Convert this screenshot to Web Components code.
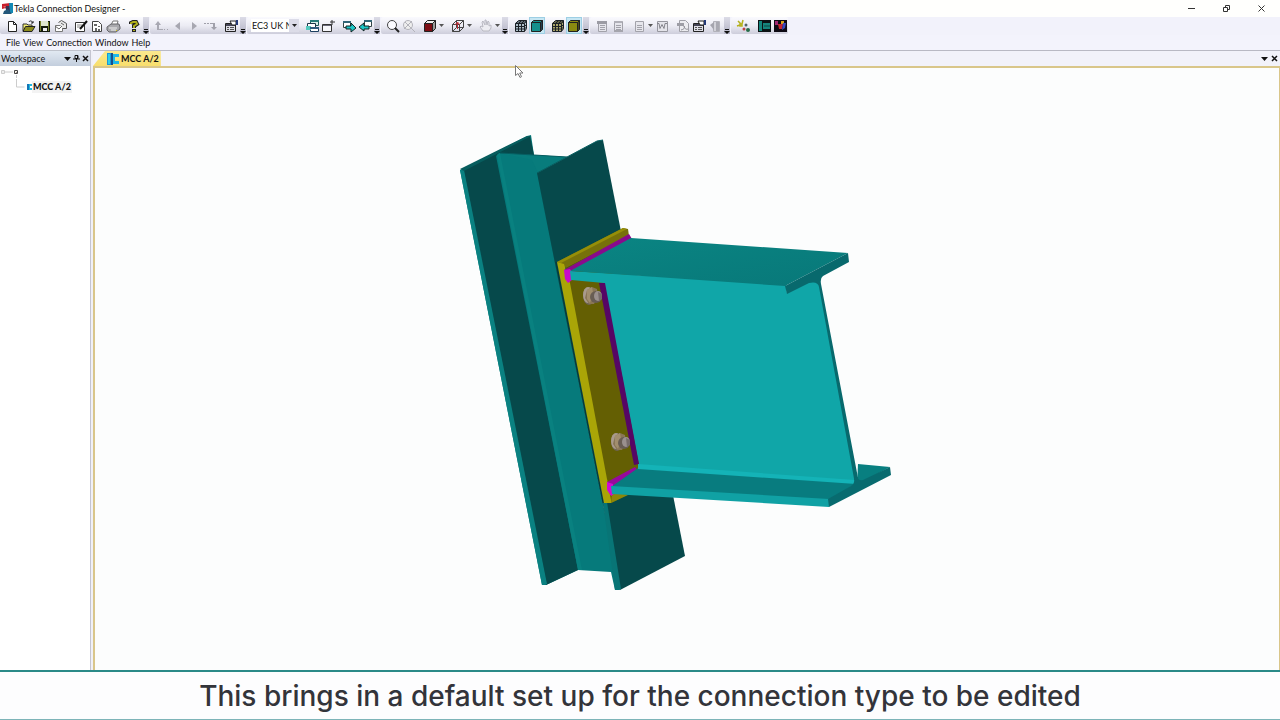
<!DOCTYPE html>
<html lang="en">
<head>
<meta charset="utf-8">
<title>Tekla Connection Designer</title>
<style>
  html, body { margin: 0; height: 100%; }
  body { font: 9px/12px Lato, "Open Sans", sans-serif; color: #111; background: #fff; overflow: hidden; }
</style>
</head>
<body>
<designer-app></designer-app>
<script>
const svg = (body, w = 16, h = 16) =>
  `<svg viewBox="0 0 ${w} ${h}" width="${w}" height="${h}" aria-hidden="true">${body}</svg>`;

const cube = (fill, side) => `<path d="M2.500 4.500h9v9h-9z" fill="${fill}" stroke="#222"/><path d="M2.500 4.500l2-2h9l-2 2z" fill="${fill}" stroke="#222"/><path d="M11.500 4.500l2-2v9l-2 2z" fill="${side}" stroke="#222"/>`;
const mesh = tint => `<path d="M2 5l3-2h9v8l-3 2H2z" fill="${tint}"/><path d="M2.500 5.500h9v8h-9zM5.500 5.500v8M8.500 5.500v8M2.500 8.500h9M2.500 11h9M2.500 5.500l3-3h8v8l-2 3M11.500 5.500l2-3M5.500 5.500l3-3M8.500 5.500l3-3M11.500 8.500l2-2M11.500 11l2-2M4 4h9" fill="none" stroke="#1b2126"/>`;
const sheet = `<path d="M4.500 3.500h8v10h-8z" fill="#e6e6ec" stroke="#a2a2aa"/><path d="M6 7.500h5M6 9.500h5M6 11.500h5" stroke="#a2a2aa"/>`;

const ICONS = {
  new: `<path d="M4.500 3.500h5l3 3v7h-8z" fill="#fff" stroke="#222"/><path d="M9.500 3.500v3h3" fill="none" stroke="#222"/>`,
  open: `<path d="M3 13V6h4l1 1h4v2" fill="#f0ec74" stroke="#333"/><path d="M3 13.500l2.500-5H15l-3 5z" fill="#8c8b1c" stroke="#222"/><path d="M9 4c1-2 3-1 4 1m0-2v2h-2" fill="none" stroke="#222"/>`,
  save: `<path d="M3 3h11v11H3z" fill="#13190c"/><path d="M5 3h7v5H5z" fill="#dfe6cf"/><path d="M4 3h1v10H4zM12 4h1v9h-1z" fill="#78822a"/><path d="M7 10h4v3H7z" fill="#eee"/>`,
  props: `<path d="M3.500 7.500h7v6h-7z" fill="#fff" stroke="#777"/><path d="M6.500 4.500l3-2 5 3v5h-4" fill="#e9e9e9" stroke="#555"/><path d="M3 8l4 3 3-3M9 5l3 2" fill="none" stroke="#666"/>`,
  edit: `<path d="M2.500 4.500h9v9h-9z" fill="#fff" stroke="#333"/><path d="M4 7h5M4 9h3" stroke="#888"/><path d="M7 11l7-8" stroke="#111" stroke-width="2"/>`,
  report: `<path d="M3.500 3.500h6l3 3v7h-9z" fill="#fff" stroke="#444"/><path d="M5 6h3v2H5zM6 10h2v3H6zM9 8h2v1H9zM9 11h2v2H9z" fill="#666"/>`,
  print: `<path d="M6 7l2-4h5l-1 4" fill="#fff" stroke="#777"/><path d="M2 9l4-3h8l1 3v2l-4 3H4l-2-2z" fill="#a9a9ad" stroke="#66666b"/><path d="M4 10h8M6 12h5" stroke="#eee"/><path d="M11 12h1v1h-1z" fill="#d8c81e"/>`,
  help: `<path d="M5 6V5l2-1h3l1 2-3 2v2" fill="none" stroke="#222" stroke-width="4"/><path d="M5 6V5l2-1h3l1 2-3 2v2" fill="none" stroke="#b0b01c" stroke-width="2"/><path d="M6 11h4v3H6z" fill="#222"/><path d="M7 12h2v1H7z" fill="#b0b01c"/>`,
  up: `<path d="M1 7l3-4 3 4H5v4h4v1H3V7z" fill="#a8a8b2"/><path d="M10 11h1v1h-1zM13 11h1v1h-1z" fill="#a5a5ae"/>`,
  back: `<path d="M5 8l5-4v8z" fill="#a7a7b1"/>`,
  fwd: `<path d="M6 4l5 4-5 4z" fill="#a7a7b1"/>`,
  down: `<path d="M2 5h2v1H2zM5 5h2v1H5zM8 5h5v4h2l-3 3-3-3h2V6H8z" fill="#a0a0aa"/>`,
  sheetpen: `<path d="M2.500 5.500h10v8h-10z" fill="#dedee6" stroke="#222"/><path d="M3 6h9v2H3z" fill="#445"/><path d="M4 9h2v1H4zM7 9h4v1H7zM4 11h2v1H4zM7 11h4v1H7z" fill="#555"/><path d="M7 3h6v4H9z" fill="#fff" stroke="#222"/><path d="M13 2h2v5h-2z" fill="#253a78"/>`,
  cascade: `<path d="M6.500 2.500h8v5h-8z" fill="#d8f0ea" stroke="#1d5a58"/><path d="M6 2h9v2H6z" fill="#257b78"/><path d="M3.500 5.500h8v4h-8z" fill="#fff" stroke="#1b3446"/><path d="M6.500 9.500h8v4h-8z" fill="#fff" stroke="#1d4060"/><path d="M2 8h5v4H2z" fill="#55c9be"/><path d="M6 9h9v2H6z" fill="#2f5b7c"/>`,
  newwin: `<path d="M2.500 6.500h9v7h-9z" fill="#f6f6fa" stroke="#333"/><path d="M3 7h8v1H3z" fill="#667"/><path d="M12 2v5M10 4h5" stroke="#333"/>`,
  winout: `<path d="M2.500 3.500h7v6h-7z" fill="#fff" stroke="#344"/><path d="M2 3h8v2H2z" fill="#367"/><path d="M5 8h5V5l5 5-5 4v-3H5z" fill="#1cc6c6" stroke="#122"/>`,
  winin: `<path d="M7.500 2.500h7v6h-7z" fill="#fff" stroke="#344"/><path d="M7 2h8v2H7z" fill="#367"/><path d="M12 8H7V5L2 9l5 4v-2h5z" fill="#1cc6c6" stroke="#122"/>`,
  zoom: `<circle cx="7" cy="7" r="4.500" fill="#fbfbff" stroke="#444"/><path d="M10 10l4 4" stroke="#222" stroke-width="2"/>`,
  zoomx: `<circle cx="7" cy="7" r="4.500" fill="#eee" stroke="#b3b3ba"/><path d="M10 10l4 4M3 11l8-8M4 4l6 6" stroke="#b3b3ba"/>`,
  solid: `<path d="M2.500 5.500l3-3h8l-3 3z" fill="#eee" stroke="#222"/><path d="M10.500 5.500l3-3v8l-3 3z" fill="#999" stroke="#222"/><path d="M2.500 5.500h8v8h-8z" fill="#7c0d14" stroke="#222"/>`,
  wire: `<path d="M2.500 6.500h7v7h-7zM2.500 6.500l4-4h7l-4 4M13.500 2.500v7l-4 4M6.500 2.500v7h7M6.500 9.500l-4 4" fill="none" stroke="#444"/><path d="M7.500 11V5M5 7l2.500-3L10 7" fill="none" stroke="#c02731"/>`,
  hand: `<path d="M5 13L2 9l1-1 2 1-1-5 1-1 2 4 0-5h1l1 5 1-4 1 1v4l2-1v3l-2 3z" fill="#ededf2" stroke="#b9b9c2"/>`,
  meshTeal: mesh('#aebfca'),
  cubeTeal: cube('#15908c', '#20424f'),
  meshOlive: mesh('#aaa46a'),
  cubeOlive: cube('#8b8a10', '#4c4c1b'),
  page: sheet + `<path d="M3 3h10v3H3z" fill="#9c9ca4"/>`,
  page2: sheet + `<path d="M4 3h8v2H4z" fill="#b0b0b8"/><path d="M4 12h9v2H4z" fill="#a5a5ad"/>`,
  page3: sheet,
  word: `<path d="M3.500 3.500h10v10h-10z" fill="#e4e4ea" stroke="#96969e"/><path d="M3 5.500h2l1 5 2-4 2 4 1-5h2" fill="none" stroke="#85858d"/>`,
  pdf: `<path d="M4.500 2.500h6l3 3v8h-9z" fill="#ececf0" stroke="#a0a0a8"/><path d="M2 5h7v3H2z" fill="#9d9da5"/><path d="M6 12c4-1 4-3 3-4 0 2 2 4 4 3" fill="none" stroke="#8d8d95"/>`,
  exit: `<path d="M6.500 3.500h6v10h-6z" fill="#d2d2d9" stroke="#b2b2ba"/><path d="M3 7l4-3v8z" fill="#a5a5ae"/><path d="M9 4h3v9H9z" fill="#a9a9b2"/>`,
  atoms: `<path d="M3 3l3 3M8 2 7 6M2 8l3-1M5 6h2v2H5z" stroke="#b5b11e" fill="#e5e25a" stroke-width="1.500"/><circle cx="11" cy="7" r="1.500" fill="#566"/><circle cx="9" cy="11" r="1.500" fill="#b44"/><circle cx="13" cy="12" r="2" fill="#286d4a"/>`,
  plate: `<path d="M2 2h13v12H2z" fill="#0b1214"/><path d="M3 3h3v10H3zM7 5h7v6H7z" fill="#15857c"/><path d="M8 7h6v2H8z" fill="#12645e"/>`,
  render: `<path d="M2 2h13v12H2z" fill="#0e0a14"/><path d="M3 3h3v4H3z" fill="#a12672"/><path d="M9 3h3v3H9z" fill="#d6a21c"/><path d="M6 6h5l-1 5H7z" fill="#c62630"/><path d="M11 5h3l-1 5-3 2z" fill="#3849be"/>`,
  joint: `<path d="M2 2h5v12H2z" fill="#1a96d8"/><path d="M7 3h7v3h-4v4h4v3H7z" fill="#20b8e8"/><path d="M6 2h2v12H6z" fill="#16508c"/><path d="M3 3h2v10H3z" fill="#2bd0ea"/>`
};

class BaseElement extends HTMLElement {
  render(html) { (this.shadowRoot || this.attachShadow({ mode: 'open' })).innerHTML = html; }
}

class ToolButton extends BaseElement {
  connectedCallback() {
    const on = this.hasAttribute('on'), name = this.getAttribute('icon');
    this.render(`<style>
      :host { display: block; flex: none; }
      button { display: block; box-sizing: border-box; width: 16px; height: 17px; padding: 0; border: 0; background: none; }
      button.on { background: #c6e6f2; box-shadow: inset 0 0 0 1px #9dcfe4; }
      svg { display: block; width: 16px; height: 16px; }
      </style><button type="button" class="${on ? 'on' : ''}" aria-label="${name}">${svg(ICONS[name])}</button>`);
  }
}
customElements.define('tool-button', ToolButton);

class ToolMore extends BaseElement {
  connectedCallback() {
    this.render(`<style>
      :host { display: flex; flex: none; }
      button { width: 7px; height: 17px; padding: 0; border: 0; background: none; display: grid; place-items: center; }
      </style><button type="button" aria-label="More">${svg('<path d="M0 0h5L2.500 3z" fill="#555"/>', 5, 3)}</button>`);
  }
}
customElements.define('tool-more', ToolMore);

class ToolGap extends BaseElement {
  connectedCallback() {
    this.render(`<style>:host { display: block; flex: none; width: 5px; }</style>`);
  }
}
customElements.define('tool-gap', ToolGap);

class ToolStrip extends BaseElement {
  connectedCallback() {
    const end = this.hasAttribute('last') ? '' : `<button type="button" aria-label="Toolbar options">${svg('<path d="M1 0h4v1H1zM0 2h6L3 5z" fill="#111"/>', 6, 5)}</button>`;
    this.render(`<style>
      :host { display: flex; flex: none; align-items: center; height: 17px; padding-left: 4px; border-radius: 2px;
        background: linear-gradient(#fafafe, #ececf4 50%, #cdcddb); }
      button { display: flex; align-items: flex-end; justify-content: center; width: 6px; height: 17px; margin: 0 0 0 1px; padding: 0;
        border: 0; background: linear-gradient(#dcdce7, #b4b4c6); }
      </style><slot></slot>${end}`);
  }
}
customElements.define('tool-strip', ToolStrip);

class CodeSelect extends BaseElement {
  connectedCallback() {
    this.render(`<style>
      :host { display: flex; flex: none; width: 48px; height: 13px; background: #fff; }
      select { appearance: none; flex: 1; min-width: 0; border: 0; padding: 0 0 0 1px; background: none; font: inherit; color: #111; text-overflow: clip; }
      i { flex: none; width: 10px; display: grid; place-items: center; background: #dcdce8; }
      </style><select aria-label="Design code"><option>EC3 UK NA</option></select><i>${svg('<path d="M0 0h5L2.500 3z" fill="#222"/>', 5, 3)}</i>`);
  }
}
customElements.define('code-select', CodeSelect);

class TitleBar extends BaseElement {
  connectedCallback() {
    this.render(`<style>
      :host { display: flex; align-items: center; justify-content: space-between; height: 17px; background: #fffffd; }
      div { display: flex; align-items: center; gap: 1px; padding-left: 1px; }
      h1 { margin: 0; font: inherit; white-space: nowrap; }
      nav { display: flex; gap: 19px; padding-right: 11px; }
      button { display: grid; place-items: center; width: 16px; height: 17px; padding: 0; border: 0; background: none; }
      </style>
      <div>${svg('<path d="M1 2l8-1v4l-8 2z" fill="#c8202c"/><path d="M4 4h5v8H6z" fill="#3a3350"/><path d="M8 1h4v10H9z" fill="#1489b5"/><path d="M3 9l4-2 4 5H2z" fill="#24587a"/><path d="M2 4h3l-1 2z" fill="#f05a5a"/>', 12, 13)}<h1>Tekla Connection Designer -</h1></div>
      <nav>
        <button type="button" aria-label="Minimize">${svg('<path d="M0 3h7v1H0z" fill="#333"/>', 7, 7)}</button>
        <button type="button" aria-label="Restore">${svg('<path d="M.5 2.500h4v4h-4zM2.500 2.500v-2h4v4h-2" fill="none" stroke="#333"/>', 7, 7)}</button>
        <button type="button" aria-label="Close">${svg('<path d="M.5.5l6 6M6.500.5l-6 6" fill="none" stroke="#333"/>', 7, 7)}</button>
      </nav>`);
  }
}
customElements.define('title-bar', TitleBar);

class ToolBars extends BaseElement {
  connectedCallback() {
    const b = names => names.split(' ').map(n =>
      n === '|' ? '<tool-gap></tool-gap>' : n === 'v' ? '<tool-more></tool-more>' :
      n[0] === '*' ? `<tool-button on icon="${n.slice(1)}"></tool-button>` : `<tool-button icon="${n}"></tool-button>`).join('');
    this.render(`<style>
      :host { display: flex; gap: 1px; height: 18px; overflow: hidden; background: #f2f2fb; }
      </style>
      <tool-strip>${b('new open save props | edit report print | help')}</tool-strip>
      <tool-strip>${b('up back fwd down | sheetpen')}</tool-strip>
      <tool-strip><code-select></code-select>${b('| cascade newwin | winout winin')}</tool-strip>
      <tool-strip>${b('zoom zoomx | solid v | wire v | hand v')}</tool-strip>
      <tool-strip>${b('meshTeal *cubeTeal | meshOlive *cubeOlive')}</tool-strip>
      <tool-strip>${b('page page2 | page3 v word | pdf sheetpen exit')}</tool-strip>
      <tool-strip last>${b('atoms | plate render')}</tool-strip>`);
  }
}
customElements.define('tool-bars', ToolBars);

class MenuBar extends BaseElement {
  connectedCallback() {
    this.render(`<style>
      :host { display: flex; align-items: center; gap: 3px; height: 15px; padding-left: 6px; background: #f3f3fc; }
      button { padding: 0; border: 0; background: none; font: inherit; color: inherit; }
      </style>${['File', 'View', 'Connection', 'Window', 'Help'].map(t => `<button type="button">${t}</button>`).join('')}`);
  }
}
customElements.define('menu-bar', MenuBar);

const TRI = svg('<path d="M0 1h7L3.500 5z" fill="#111"/>', 7, 6);
const CROSS = svg('<path d="M1 1l5 5M6 1L1 6" stroke="#111" stroke-width="1.500"/>', 7, 7);

class WorkspacePane extends BaseElement {
  connectedCallback() {
    this.render(`<style>
      :host { display: flex; flex-direction: column; flex: none; width: 90px; border-right: 1px solid #c5c5d0; background: #fff; }
      header { display: flex; align-items: center; height: 15px; padding-left: 1px; border-top: 1px solid #bfc3cc;
        background: linear-gradient(#e1e9f2, #c3cedd); }
      h2 { flex: 1; margin: 0; font: inherit; }
      header button { display: grid; place-items: center; width: 9px; height: 14px; padding: 0; border: 0; background: none; }
      .root, .leaf { display: flex; align-items: center; height: 12px; }
      .leaf { height: 16px; padding-top: 1px; font-weight: bold; }
      .leaf b { background: #f3f3f3; padding: 0 1px; }
      </style>
      <header><h2>Workspace</h2>
        <button type="button" aria-label="Menu">${TRI}</button>
        <button type="button" aria-label="Pin">${svg('<path d="M2 .5h3v3H2zM4.500 1v3M0 4h7M3.500 4v3" fill="none" stroke="#111"/>', 7, 7)}</button>
        <button type="button" aria-label="Close">${CROSS}</button>
      </header>
      <div class="root">${svg('<path d="M1.500 4.500h3v3h-3z" fill="#eee" stroke="#ccc"/><path d="M5 6h8M16.500 9v3" stroke="#ccc"/><path d="M14.500 4.500h3v3h-3z" fill="#f6f2e6" stroke="#444"/><path d="M16 6h1v1h-1z" fill="#988"/>', 26, 12)}</div>
      <div class="leaf">${svg('<path d="M16.500 0v8h8" fill="none" stroke="#ccc"/><path d="M27 5h3v6h-3z" fill="#1476b8"/><path d="M29 5h3v2h-2v2h2v2h-3z" fill="#20b6dc"/>', 32, 16)}<b>MCC A/2</b></div>`);
  }
}
customElements.define('workspace-pane', WorkspacePane);

class ConnectionModel extends BaseElement {
  connectedCallback() {
    const bolt = (x, y) => `<g transform="translate(${x} ${y})">
      <ellipse cx="-3" cy="0" rx="6" ry="9" fill="#6f6557"/><ellipse cx="-4" cy="-1" rx="5" ry="8" fill="#a99b8c"/>
      <path d="M-5-6l5-3 5 2 1 8-4 7h-5l-4-6z" fill="#897657"/><path d="M-5-6l5-3 1 6-3 10-3-4z" fill="#a18e6e"/>
      <ellipse cx="4" cy="1" rx="6" ry="6" fill="#685d54"/><ellipse cx="6" cy="0" rx="4" ry="5" fill="#9a908e"/><path d="M6-4l4 2v5l-3 2z" fill="#766b6a"/></g>`;
    this.render(`<style>:host { display: block; min-width: 0; min-height: 0; } svg { display: block; width: 100%; height: 100%; }</style>
    <svg viewBox="95 68 1184 602" role="img" aria-label="Beam to column connection">
      <defs>
        <linearGradient id="fl" x1="0" y1="0" x2="1" y2="1"><stop offset="0" stop-color="#0a8583"/><stop offset="1" stop-color="#087879"/></linearGradient>
      </defs>
      <path d="M460 170L527 136 531 135 534 155 567 157 538 173 620 590 615 590 611 572 578 570 546 585 542 585z" fill="#067a7b"/>
      <path d="M463 170L530 136 534 155 499 153 496 156 578 570 546 585z" fill="#06494b"/>
      <path d="M460 170L464 170 547 584 542 585z" fill="#0a8181"/>
      <path d="M460 169L527 136 531 136 464 171z" fill="#075d5e"/>
      <path d="M497 155L500 153 582 570 578 570z" fill="#098180"/>
      <path d="M500 153L567 157 538 173 532 160z" fill="#087c7c"/>
      <path d="M500 153L534 155 567 157" fill="none" stroke="#075d60"/>
      <path d="M537 173L597 141 603 140 685 556 620 590z" fill="#06494b"/>
      <path d="M603 503L607 502 621 589 615 590z" fill="#087576"/>
      <path d="M537 173L597 141 603 140" fill="none" stroke="#086062"/>
      <path d="M556 262L603 503" fill="none" stroke="#073839"/>
      <path d="M557 262L623 228 628 229 629 236 566 268z" fill="#77710a"/>
      <path d="M557 262L623 228 627 229 561 263z" fill="#958e09"/>
      <path d="M566 268L628 236 640 470 627 495 611 503z" fill="#645f03"/>
      <path d="M557 262L564 264 570 283 611 500 611 503 604 503z" fill="#aaa507"/>
      <path d="M611 503L628 495 612 492z" fill="#8d8708"/>
      <path d="M564 270L629 234 632 239 571 274z" fill="#890a8d"/>
      <path d="M564 270L570 269 573 274 572 280 568 283 565 279z" fill="#c90bca"/>
      <path d="M607 482L635 467 638 471 613 487z" fill="#970a9c"/>
      <path d="M607 482L613 484 614 494 611 496 607 490z" fill="#d20bd2"/>
      <path d="M570 271L786 284 787 293 812 280 819 281 857 485 640 470 604 283 571 280z" fill="#10a6a8"/>
      <path d="M599 283L605 283 639 464 634 465z" fill="#560664"/>
      <path d="M570 271L631 238 848 253 785 286z" fill="url(#fl)"/>
      <path d="M785 286L848 253 849 262 823 276Q820 278 821 284L858 478 855 484 819 287Q818 281 809 283L787 294z" fill="#08696d"/>
      <path d="M858 464L890 467 857 485z" fill="#087f80"/>
      <path d="M611 487L638 468 857 483 828 501z" fill="#087c7f"/>
      <path d="M638 464L855 480 856 484 638 469z" fill="#14b3b7"/>
      <path d="M611 486L829 499 829 507 612 494z" fill="#10a1a4"/>
      <path d="M828 499L851 486Q855 484 854 478L858 477Q858 481 863 480L890 467 891 475 829 507z" fill="#086b6f"/>
      ${bolt(592, 296)}${bolt(620, 442)}
    </svg>`);
  }
}
customElements.define('connection-model', ConnectionModel);

class DocumentArea extends BaseElement {
  connectedCallback() {
    this.render(`<style>
      :host { display: flex; flex-direction: column; flex: 1; min-width: 0; margin-left: 2px; }
      header { display: flex; align-items: stretch; justify-content: space-between; height: 15px; border-top: 1px solid #b9b9c4; background: #f2f2fa; }
      .tab { display: flex; align-items: center; height: 15px; padding: 0 2px 0 12px; border: 0; font: inherit; font-weight: bold; color: #111;
        background: linear-gradient(#fbe98f, #f8de6c); clip-path: polygon(0 100%, 12px 0, 100% 0, 100% 100%); }
      .tools { display: flex; gap: 1px; padding-right: 1px; }
      .tools button { display: grid; place-items: center; width: 9px; height: 15px; padding: 0; border: 0; background: none; }
      connection-model { flex: 1; border: solid #d9c68a; border-width: 2px 1px 0 2px; background: #fcfdfd; }
      </style>
      <header><button type="button" class="tab">${svg(ICONS.joint)}<span>MCC A/2</span></button>
        <div class="tools"><button type="button" aria-label="Windows">${TRI}</button><button type="button" aria-label="Close">${CROSS}</button></div></header>
      <connection-model></connection-model>`);
  }
}
customElements.define('document-area', DocumentArea);

class VideoCaption extends BaseElement {
  connectedCallback() {
    this.render(`<style>
      :host { display: flex; align-items: center; justify-content: center; box-sizing: border-box; height: 50px; flex: none;
        border-top: 2px solid #2b8a88; border-bottom: 1px solid #7db4b8; background: #fdfdfe; color: #33343a; }
      p { margin: 0; font: 500 28px/32px Inter, sans-serif; white-space: nowrap; }
      </style><p><slot></slot></p>`);
  }
}
customElements.define('video-caption', VideoCaption);

class DesignerApp extends BaseElement {
  connectedCallback() {
    this.render(`<style>
      :host { display: flex; flex-direction: column; height: 100vh; position: relative; }
      title-bar, tool-bars, menu-bar { flex: none; }
      main { display: flex; flex: 1; min-height: 0; background: #f0f0f8; }
      .pointer { position: absolute; left: 515px; top: 65px; }
      </style>
      <title-bar></title-bar><tool-bars></tool-bars><menu-bar></menu-bar>
      <main><workspace-pane></workspace-pane><document-area></document-area></main>
      <video-caption>This brings in a default set up for the connection type to be edited</video-caption>
      <div class="pointer">${svg('<path d="M.5.5v10l2.500-2 2 4 1.500-.8-1.800-3.700h3.300z" fill="#fff" stroke="#777"/>', 9, 13)}</div>`);
  }
}
customElements.define('designer-app', DesignerApp);
</script>
</body>
</html>
